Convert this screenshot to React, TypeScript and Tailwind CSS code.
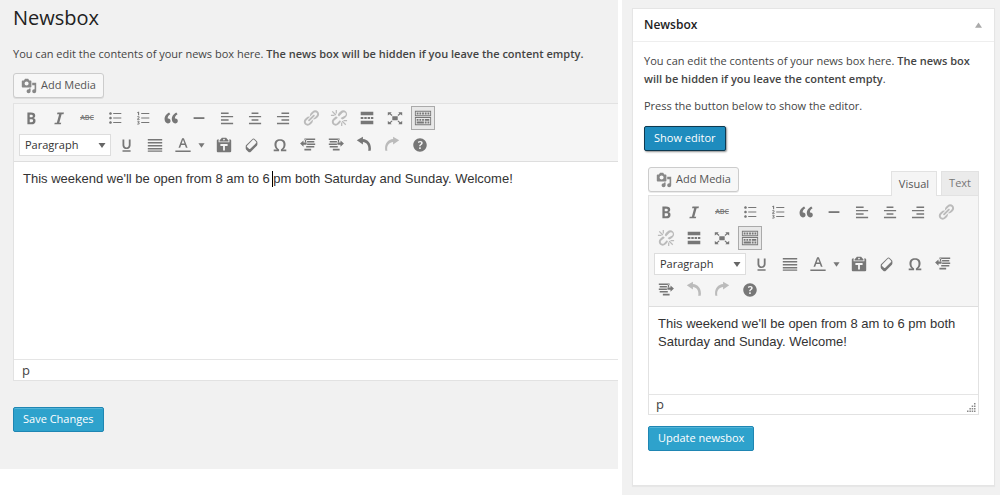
import { useState } from "react";
import type { ReactNode } from "react";

const paths = {
  media:
    "M13 11V4c0-.55-.45-1-1-1h-1.67L9 1H5L3.67 3H2c-.55 0-1 .45-1 1v7c0 .55.45 1 1 1h10c.55 0 1-.45 1-1zM7 4.5c1.38 0 2.5 1.12 2.5 2.5S8.38 9.5 7 9.5 4.5 8.38 4.5 7 5.62 4.5 7 4.5zM14 6h5v10.5c0 1.38-1.12 2.5-2.5 2.5S14 17.88 14 16.5s1.12-2.5 2.5-2.5c.17 0 .34.02.5.05V9h-3V6zm-4 8.05V13h2v3.5c0 1.38-1.12 2.5-2.5 2.5S7 17.88 7 16.5 8.12 14 9.5 14c.17 0 .34.02.5.05z",
  bold: "M6 4v13h4.54c1.37 0 2.46-.33 3.26-1 .8-.66 1.2-1.58 1.2-2.77 0-.84-.17-1.51-.51-2.01s-.9-.85-1.67-1.03v-.09c.57-.1 1.02-.4 1.36-.9s.51-1.13.51-1.91c0-1.14-.39-1.98-1.17-2.5C12.75 4.26 11.5 4 9.78 4H6zm2.57 5.15V6.26h1.36c.73 0 1.27.11 1.61.32.34.22.51.58.51 1.07 0 .54-.16.92-.47 1.15s-.82.35-1.51.35h-1.5zm0 2.19h1.6c1.44 0 2.16.53 2.16 1.61 0 .6-.17 1.05-.51 1.34s-.86.43-1.57.43H8.57v-3.38z",
  italic: "M8.3 4h7.2l-.5 1.7h-2.1l-2.6 9.6h2.2L12 17H4.8l.5-1.700h2.300l2.600-9.600H7.800z",
  ul: "M5 6.5C4.2 6.5 3.5 5.8 3.5 5S4.2 3.5 5 3.5 6.5 4.2 6.5 5 5.8 6.5 5 6.5zM8 4.4h9v1.2H8zM5 11.5c-.8 0-1.5-.7-1.5-1.5S4.2 8.5 5 8.5s1.5.7 1.5 1.5-.7 1.5-1.5 1.5zM8 9.4h9v1.2H8zM5 16.5c-.8 0-1.5-.7-1.5-1.5s.7-1.5 1.5-1.5 1.5.7 1.5 1.5-.7 1.5-1.5 1.5zM8 14.4h9v1.2H8z",
  ol: "M8 4.4h9v1.2H8zM8 9.4h9v1.2H8zM8 14.4h9v1.2H8zM4.5 7V4.2l-.9.5V3.6L4.8 3h.9v4zM3.4 12v-.8l1.5-1.4c.5-.5.1-1-.4-.9-.4 0-.7.2-1 .5V8.4c1.3-.9 2.7-.4 2.7.7 0 .9-.7 1.3-1.3 2h1.4v.9zM3.4 17v-.9c.9.4 1.8.3 1.8-.2 0-.4-.4-.5-1.1-.5v-.8c.6 0 1-.1 1-.4 0-.5-.8-.5-1.5-.1v-.9c1.3-.5 2.6-.1 2.6.8 0 .5-.3.8-.8 1 .6.1.9.5.9 1 0 1.1-1.5 1.5-2.9 1z",
  quote:
    "M9.49 13.22c0-.74-.2-1.38-.61-1.9-.62-.78-1.83-.88-2.53-.72-.29-1.65 1.11-3.75 2.92-4.65L7.88 4c-2.73 1.3-5.42 4.28-4.96 8.05C3.21 14.43 4.59 16 6.54 16c.85 0 1.56-.25 2.12-.75s.83-1.18.83-2.03zm8.05 0c0-.74-.2-1.38-.61-1.9-.63-.78-1.83-.88-2.53-.72-.29-1.65 1.11-3.75 2.92-4.65L15.93 4c-2.73 1.3-5.41 4.28-4.95 8.05.29 2.38 1.66 3.95 3.61 3.95.85 0 1.56-.25 2.12-.75s.83-1.18.83-2.03z",
  rule: "M4 9.1h12v2H4z",
  left: "M3.3 3.9h8.5v1.6H3.3zM3.3 7.7h13.5v1.6H3.3zM3.3 11.5h8.5v1.6H3.3zM3.3 15.3h13.5v1.6H3.3z",
  center: "M6.2 3.9h7.6v1.6H6.2zM3.3 7.7h13.5v1.6H3.3zM6.2 11.5h7.6v1.6H6.2zM3.3 15.3h13.5v1.6H3.3z",
  right: "M8.3 3.9h8.5v1.6H8.3zM3.3 7.7h13.5v1.6H3.3zM8.3 11.5h8.5v1.6H8.3zM3.3 15.3h13.5v1.6H3.3z",
  justify: "M2 3.3h16V5H2zM2 6.6h16v1.7H2zM2 9.9h16v1.7H2zM2 13.2h16v1.7H2zM2 16.1h16v1.3H2z",
  link: "M17.74 2.76c1.68 1.69 1.68 4.41 0 6.1l-1.53 1.52c-1.12 1.12-2.7 1.47-4.14 1.09l2.62-2.61.76-.77.76-.76c.84-.84.84-2.2 0-3.04-.84-.85-2.2-.85-3.04 0l-.77.76-3.38 3.38c-.37-1.44-.02-3.02 1.1-4.14l1.52-1.53c1.69-1.68 4.42-1.68 6.1 0zM8.59 13.43l5.34-5.34c.42-.42.42-1.1 0-1.52-.44-.43-1.13-.39-1.53 0l-5.33 5.34c-.42.42-.42 1.1 0 1.52.44.43 1.13.39 1.52 0zm-.76 2.29l4.14-4.15c.38 1.44.03 3.02-1.09 4.14l-1.52 1.53c-1.69 1.68-4.41 1.68-6.1 0-1.68-1.68-1.68-4.42 0-6.1l1.53-1.52c1.12-1.12 2.7-1.47 4.14-1.1l-4.14 4.15c-.85.84-.85 2.2 0 3.05.84.84 2.2.84 3.04 0z",
  more: "M17 7V3H3v4h14zM6 11V9H3v2h3zm3.7 0V9H7v2h2.7zm3.6 0V9h-2.600v2h2.600zM17 11V9h-2.700v2H17zm0 6v-4H3v4h14z",
  fullscreen:
    "M7 8h6v4.5H7zM2 3.5h4.3L5.1 4.9l2.100 1.900-.9.9-2.200-1.900L2 7.300zM18 3.500v3.800l-2.100-1.500-2.200 1.900-.9-.9 2.100-1.900-1.200-1.400zM2 17v-3.800l2.100 1.500 2.200-1.900.9.9-2.100 1.900L6.300 17zM18 17h-4.300l1.200-1.400-2.100-1.900.9-.9 2.200 1.900 2.100-1.500z",
  sink: "M19 2v6H1V2h18zm-1 5V3H2v4h16zM5 4v2H3V4h2zm3 0v2H6V4h2zm3 0v2H9V4h2zm3 0v2h-2V4h2zm3 0v2h-2V4h2zm2 5v9H1V9h18zm-1 8v-7H2v7h16zM5 11v2H3v-2h2zm3 0v2H6v-2h2zm3 0v2H9v-2h2zm6 0v2h-5v-2h5zm-6 3v2H3v-2h8zm3 0v2h-2v-2h2zm3 0v2h-2v-2h2z",
  underline:
    "M14 4h-2v5.71c0 1.99-1.12 2.98-2.45 2.98-1.32 0-2.55-1-2.55-2.96V4H5v5.87c0 1.91 1 4.54 4.48 4.54 3.49 0 4.52-2.58 4.52-4.5V4zm0 13.4v-1.600H5v1.600h9z",
  color: "M13.23 13h1.9L11 2.5H9L5 13h1.88l1.07-3h4.18zm-1.53-4.54H8.51L10 4.1zM1.5 16.2h17v1.600h-17z",
  paste:
    "M12.38 2L15 5v1H5V5l2.64-3h4.74zM10 5c.55 0 1-.44 1-1 0-.55-.45-1-1-1s-1 .45-1 1c0 .56.45 1 1 1zm5.45-1H17c.55 0 1 .45 1 1v12c0 .56-.45 1-1 1H3c-.55 0-1-.44-1-1V5c0-.55.45-1 1-1h1.55L4 4.63V7h12V4.63zM14 11V9H6v2h3v5h2v-5h3z",
  eraser:
    "M14.29 4.59l1.1 1.11c.41.4.61.94.61 1.47v2.12c0 .53-.2 1.07-.61 1.47l-6.63 6.63c-.4.41-.94.61-1.47.61s-1.07-.2-1.47-.61l-1.11-1.1-1.1-1.11c-.41-.4-.61-.94-.61-1.47v-2.12c0-.54.2-1.07.61-1.47l6.63-6.63c.4-.41.94-.61 1.47-.61s1.06.2 1.47.61zm-6.21 9.7l6.42-6.42c.39-.39.39-1.03 0-1.43L12.36 4.3c-.19-.19-.45-.29-.72-.29s-.52.1-.71.29l-6.42 6.42c-.39.4-.39 1.04 0 1.43l2.14 2.14c.38.38 1.04.38 1.43 0z",
  omega:
    "M10 5.4c1.27 0 2.24.36 2.91 1.08.66.71 1 1.76 1 3.13 0 1.28-.23 2.37-.69 3.27-.47.89-1.27 1.52-2.22 2.12v2h6v-2h-3.69c.92-.64 1.62-1.34 2.12-2.34.49-1.01.74-2.13.74-3.35 0-1.78-.55-3.19-1.65-4.22S11.92 3.54 10 3.54s-3.43.53-4.52 1.57c-1.1 1.04-1.65 2.44-1.65 4.2 0 1.21.24 2.31.73 3.33.48 1.01 1.19 1.71 2.1 2.36H3v2h6v-2c-.98-.64-1.8-1.28-2.24-2.17-.45-.89-.67-1.96-.67-3.22 0-1.37.33-2.41 1-3.13C7.75 5.76 8.72 5.4 10 5.4z",
  outdent:
    "M6 2.8h12v1.7H6zM9 5.6h8v1.7H9zM9 8.4h9v1.7H9zM8 11.2h9v1.7H8zM6 14.3h7.5V16H6zM6.5 4H8v3H6.500zM5 4.900v2.200h3.500v2.600H5v2.200L1.200 8.400z",
  indent:
    "M2 2.8h12v1.7H2zM3 5.6h8v1.7H3zM2 8.4h9v1.7H2zM3 11.2h9v1.7H3zM6.5 14.3H14V16H6.500zM12 4h1.500v3H12zM15 4.900v2.200h-3.500v2.600H15v2.200l3.800-3.500z",
  undo: "M2 4.6L8.8.8v2.600c5.600.5 8.900 5 8.900 10.300 0 .8-.1 1.800-.3 2.600h-2.800c.2-.8.3-1.400.3-2.200 0-4-2.300-6.900-6.100-7.300v2.700z",
  redo: "M18 4.6L11.2.8v2.600c-5.600.5-8.900 5-8.900 10.300 0 .8.1 1.800.3 2.600h2.300c-.2-.8-.3-1.400-.3-2.200 0-4 2.800-6.900 6.600-7.300v2.700z",
  help: "M17.5 10c0-4.100-3.400-7.500-7.500-7.500S2.500 5.900 2.500 10s3.400 7.500 7.500 7.500 7.500-3.400 7.500-7.500zm-6.800 1.480H9.140v-.43c0-.38.08-.7.24-.98s.46-.57.88-.89c.41-.29.68-.53.81-.71.14-.18.2-.39.2-.62 0-.25-.09-.44-.28-.58-.19-.13-.45-.19-.79-.19-.58 0-1.25.19-2 .57l-.64-1.280c.87-.49 1.800-.74 2.770-.74.81 0 1.450.2 1.920.58.48.39.71.91.71 1.550 0 .43-.09.8-.29 1.110-.19.32-.57.67-1.110 1.060-.38.28-.61.49-.71.63-.1.15-.15.34-.15.57v.35zm-1.470 2.740c-.18-.17-.27-.42-.27-.73 0-.33.08-.58.26-.75s.43-.25.77-.25c.32 0 .57.09.75.26s.27.42.27.74c0 .3-.09.55-.27.72-.18.18-.43.27-.75.27-.33 0-.58-.09-.76-.26z",
  unlink:
    "M17.74 2.76c1.68 1.69 1.68 4.41 0 6.1l-1.53 1.52c-.8.8-1.8 1.2-2.8 1.26l-1.600-1.600 3.640-1.950 1.520-.76c.84-.84.84-2.200 0-3.040-.84-.85-2.200-.85-3.040 0L10 8.220 8.700 6.900c.1-.8.500-1.600 1.420-2.620l1.520-1.530c1.690-1.680 4.420-1.680 6.100 0zM10.900 12.500l1.200 1.200c-.1.700-.500 1.300-1.220 2l-1.520 1.530c-1.690 1.680-4.410 1.680-6.100 0-1.680-1.680-1.680-4.420 0-6.100l1.530-1.520c.700-.7 1.500-1.100 2.400-1.200l1.500 1.400-3.900 2.850c-.85.84-.85 2.200 0 3.050.84.84 2.200.84 3.040 0zM2 3.100l1-1 4 4-1 1zM6.300 1h1.400v4H6.300zM1 6.300h4v1.400H1zM13 14l1-1 4 4-1 1zM12.300 15h1.400v4h-1.400zM15 12.300h4v1.400h-4z",
};

type IconName = keyof typeof paths;

function Icon({ name, className = "size-[18px]" }: { name: IconName; className?: string }) {
  return (
    <svg viewBox="0 0 20 20" fill="currentColor" fillRule="evenodd" aria-hidden="true" className={`${className} shrink-0`}>
      <path d={paths[name]} />
    </svg>
  );
}

function ToolButton({
  label,
  name,
  disabled,
  active,
  children,
}: {
  label: string;
  name?: IconName;
  disabled?: boolean;
  active?: boolean;
  children?: ReactNode;
}) {
  const look = active ? "border-[#aaa] bg-[#e8e8e8]" : "border-transparent";
  return (
    <button
      type="button"
      aria-label={label}
      aria-pressed={active}
      disabled={disabled}
      className={`flex size-6 items-center justify-center border text-[#777] disabled:text-[#bbb] ${look}`}
    >
      {name ? <Icon name={name} /> : children}
    </button>
  );
}

function AddMedia() {
  return (
    <button
      type="button"
      className="flex h-[25px] items-center gap-1 rounded-[3px] border border-[#ccc] bg-[#f7f7f7] px-[7px] text-[11px] text-[#555] shadow-[0_1px_0_rgba(0,0,0,0.08)]"
    >
      <span className="text-[#888]">
        <Icon name="media" className="size-4" />
      </span>
      Add Media
    </button>
  );
}

function PrimaryButton({ children, pressed }: { children: ReactNode; pressed?: boolean }) {
  const look = pressed
    ? "border-[#0e3950] bg-[#1e8cbe] shadow-[1px_1px_2px_rgba(0,0,0,0.45)]"
    : "border-[#1f86b3] bg-[#2ea2cc] shadow-[inset_0_1px_0_rgba(120,200,230,0.5)]";
  return (
    <button type="button" className={`block h-[25px] rounded-[2px] border px-[9px] text-[11px] text-white ${look}`}>
      {children}
    </button>
  );
}

function Toolbar({ undoable, className }: { undoable?: boolean; className: string }) {
  return (
    <div className={`flex flex-col border-b border-[#dedede] bg-[#f5f5f5] pl-[5px] pb-1 ${className}`}>
      <div className="flex flex-wrap gap-x-1 gap-y-[2px]">
        <ToolButton label="Bold" name="bold" />
        <ToolButton label="Italic" name="italic" />
        <ToolButton label="Strikethrough">
          <span className="text-[7px] font-semibold line-through">ABC</span>
        </ToolButton>
        <ToolButton label="Bulleted list" name="ul" />
        <ToolButton label="Numbered list" name="ol" />
        <ToolButton label="Blockquote" name="quote" />
        <ToolButton label="Horizontal line" name="rule" />
        <ToolButton label="Align left" name="left" />
        <ToolButton label="Align center" name="center" />
        <ToolButton label="Align right" name="right" />
        <ToolButton label="Insert link" name="link" disabled />
        <ToolButton label="Remove link" name="unlink" disabled />
        <ToolButton label="Insert Read More tag" name="more" />
        <ToolButton label="Fullscreen" name="fullscreen" />
        <ToolButton label="Toolbar toggle" name="sink" active />
      </div>
      <div className="flex flex-wrap gap-x-1 gap-y-[2px]">
        <div className="relative flex h-6 w-[92px] items-center">
          <select
            aria-label="Text style"
            className="h-[22px] w-full appearance-none border border-[#ddd] bg-white pl-[5px] text-[11px] text-[#333]"
          >
            <option>Paragraph</option>
            <option>Heading 1</option>
            <option>Heading 2</option>
          </select>
          <svg viewBox="0 0 8 5" aria-hidden="true" className="pointer-events-none absolute right-[5px] h-[5px] w-[8px] text-[#666]">
            <path d="M.5 0h7L4 5z" fill="currentColor" />
          </svg>
        </div>
        <ToolButton label="Underline" name="underline" />
        <ToolButton label="Justify" name="justify" />
        <div className="flex">
          <ToolButton label="Text color" name="color" />
          <button type="button" aria-label="Choose text color" className="flex h-6 w-[13px] items-center justify-center text-[#777]">
            <svg viewBox="0 0 8 5" aria-hidden="true" className="h-[5px] w-[7px]">
              <path d="M.5 0h7L4 5z" fill="currentColor" />
            </svg>
          </button>
        </div>
        <ToolButton label="Paste as text" name="paste" />
        <ToolButton label="Clear formatting" name="eraser" />
        <ToolButton label="Special character" name="omega" />
        <ToolButton label="Decrease indent" name="outdent" />
        <ToolButton label="Increase indent" name="indent" />
        <ToolButton label="Undo" name="undo" disabled={!undoable} />
        <ToolButton label="Redo" name="redo" disabled />
        <ToolButton label="Keyboard shortcuts" name="help" />
      </div>
    </div>
  );
}

const message = "This weekend we'll be open from 8 am to 6 pm both Saturday and Sunday. Welcome!";

function EditorText({ className }: { className: string }) {
  const [text, setText] = useState(message);
  return (
    <textarea
      aria-label="News box content"
      spellCheck={false}
      value={text}
      onChange={(e) => setText(e.target.value)}
      className={`block w-full resize-none bg-white px-[9px] pt-2 font-['Liberation_Sans',Arial,sans-serif] text-[13px] leading-[18px] text-[#333] outline-none ${className}`}
    />
  );
}

function SettingsPage() {
  return (
    <main className="min-w-0 flex-1 bg-[#f1f1f1] pt-2 pb-[37px] pl-[13px]">
      <h1 className="text-xl leading-5 text-[#222]">Newsbox</h1>
      <p className="mt-[17px] mb-[10px] text-[11px] leading-[18px]">
        You can edit the contents of your news box here.{" "}
        <strong className="font-semibold">The news box will be hidden if you leave the content empty.</strong>
      </p>
      <AddMedia />
      <div className="mt-[5px] border-y border-l border-[#e2e2e2] bg-white">
        <Toolbar undoable className="gap-[3px] pt-[2px]" />
        <div className="relative">
          <EditorText className="h-[197px]" />
          <span className="absolute top-[9px] left-[258px] h-4 w-px bg-black" />
        </div>
        <div className="border-t border-[#e5e5e5] pl-2 text-[13px] leading-5">p</div>
      </div>
      <div className="mt-[26px]">
        <PrimaryButton>Save Changes</PrimaryButton>
      </div>
    </main>
  );
}

function WidgetPanel() {
  return (
    <aside className="w-[378px] shrink-0 self-stretch bg-[#f1f1f1] pt-2 pr-[5px] pb-[9px] pl-[10px]">
      <section className="border border-[#e5e5e5] bg-white pb-[34px] shadow-[0_1px_1px_rgba(0,0,0,0.04)]">
        <header className="flex h-[33px] items-center justify-between border-b border-[#eee] pr-3 pl-[11px]">
          <h2 className="text-xs font-semibold text-[#222]">Newsbox</h2>
          <button type="button" aria-label="Collapse Newsbox" className="text-[#aaa]">
            <svg viewBox="0 0 8 6" aria-hidden="true" className="h-[6px] w-[7px]">
              <path d="M4 0l4 6H0z" fill="currentColor" />
            </svg>
          </button>
        </header>
        <div className="px-[11px] pt-[10px]">
          <p className="text-[11px] leading-[18px]">
            You can edit the contents of your news box here.{" "}
            <strong className="font-semibold">The news box will be hidden if you leave the content empty</strong>.
          </p>
          <p className="mt-[9px] mb-[11px] text-[11px] leading-[18px]">Press the button below to show the editor.</p>
          <PrimaryButton pressed>Show editor</PrimaryButton>
          <div className="mt-4 px-1">
            <div className="flex h-7 items-start justify-between">
              <AddMedia />
              <div role="tablist" aria-label="Editor mode" className="flex items-start gap-1 pt-1 text-[11px]">
                <button
                  type="button"
                  role="tab"
                  aria-selected="true"
                  className="relative h-[25px] border border-b-0 border-[#e2e2e2] bg-[#f5f5f5] px-[7px] text-[#555]"
                >
                  Visual
                </button>
                <button
                  type="button"
                  role="tab"
                  aria-selected="false"
                  className="h-6 border border-b-0 border-[#e2e2e2] bg-[#ebebeb] px-[7px] text-[#777]"
                >
                  Text
                </button>
              </div>
            </div>
            <div className="border border-[#e2e2e2] bg-white">
              <Toolbar className="gap-[2px] pt-1" />
              <EditorText className="h-[87px]" />
              <div className="flex items-end justify-between border-t border-[#e5e5e5] pr-[2px] pl-[7px] text-[13px] leading-[19px]">
                p
                <svg viewBox="0 0 9 9" fill="#888" aria-hidden="true" className="mb-[2px] size-[9px]">
                  <path d="M7 0h1.5v1.5H7zM7 2.5h1.5V4H7zM4.7 2.5h1.5V4H4.7zM7 5h1.5v1.5H7zM4.7 5h1.5v1.5H4.7zM2.4 5h1.5v1.5H2.4zM7 7.5h1.5V9H7zM4.7 7.5h1.5V9H4.7zM2.4 7.5h1.5V9H2.4zM0 7.5h1.5V9H0z" />
                </svg>
              </div>
            </div>
            <div className="mt-[11px]">
              <PrimaryButton>Update newsbox</PrimaryButton>
            </div>
          </div>
        </div>
      </section>
    </aside>
  );
}

export default function App() {
  return (
    <div className="flex min-h-screen items-start gap-1 bg-white font-['Open_Sans','Noto_Sans',sans-serif] text-[#444]">
      <SettingsPage />
      <WidgetPanel />
    </div>
  );
}
